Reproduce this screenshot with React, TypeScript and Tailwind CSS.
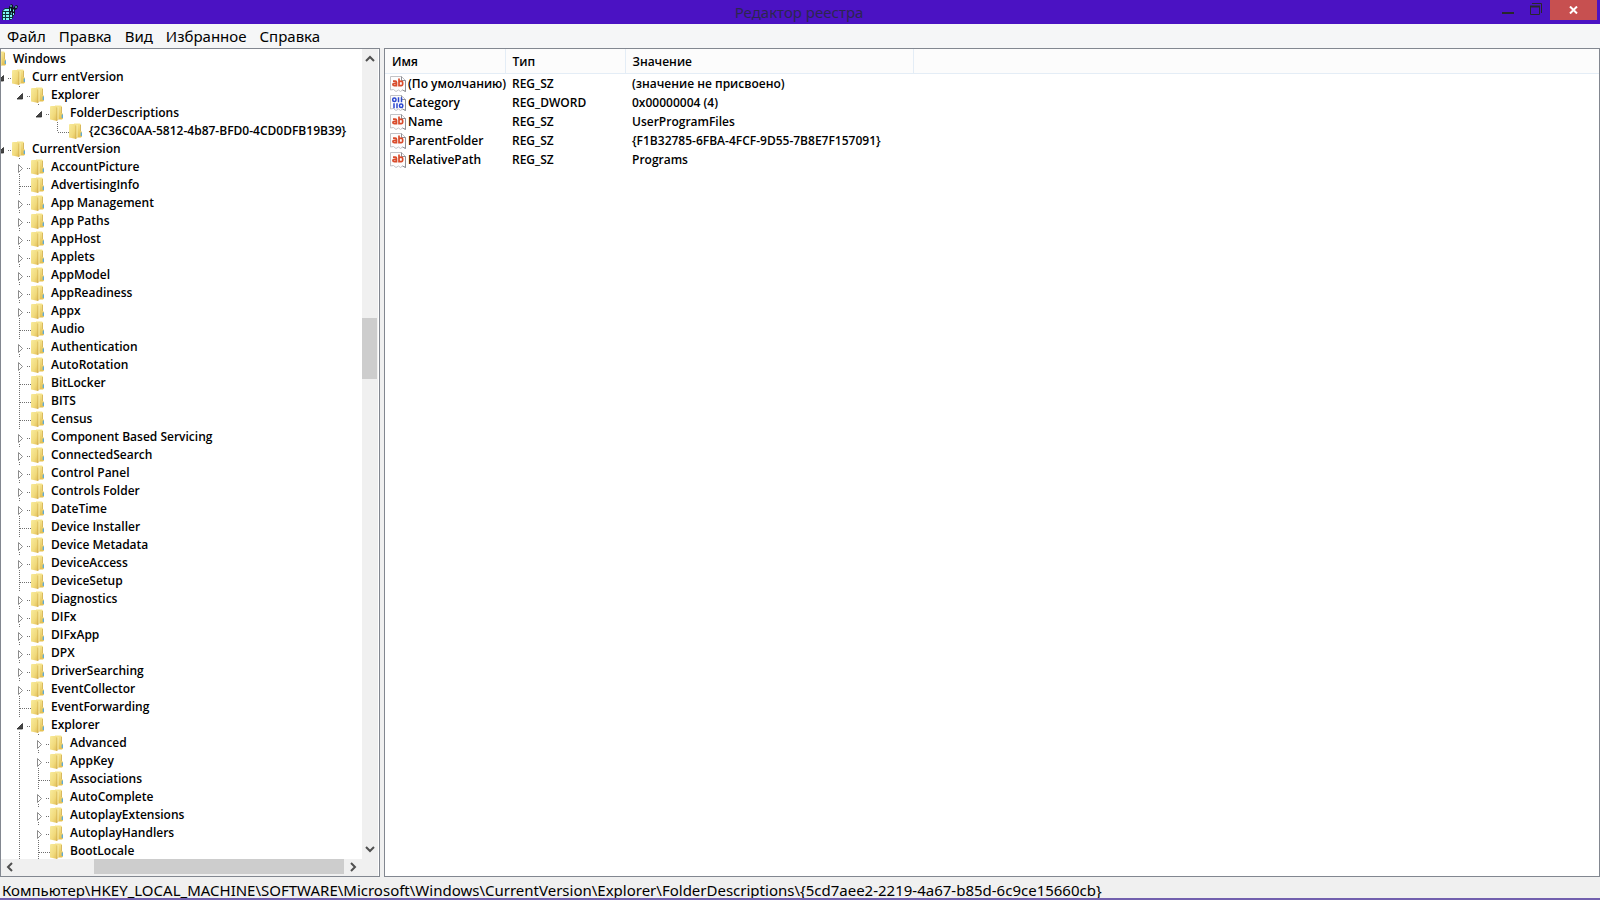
import { useState } from 'react';

interface TreeNode {
  name: string;
  level: number;
  state?: 'open' | 'closed';
  last?: boolean;
  guides?: number[];
}

interface RegistryValue {
  name: string;
  type: string;
  value: string;
}

const menuItems = ['Файл', 'Правка', 'Вид', 'Избранное', 'Справка'];

// Subkeys of CurrentVersion, a leading "-" marks a key without children
const versionKeys = [
  'AccountPicture',
  '-AdvertisingInfo',
  'App Management',
  'App Paths',
  'AppHost',
  'Applets',
  'AppModel',
  'AppReadiness',
  'Appx',
  '-Audio',
  'Authentication',
  'AutoRotation',
  '-BitLocker',
  '-BITS',
  '-Census',
  'Component Based Servicing',
  'ConnectedSearch',
  'Control Panel',
  'Controls Folder',
  'DateTime',
  '-Device Installer',
  'Device Metadata',
  'DeviceAccess',
  '-DeviceSetup',
  'Diagnostics',
  'DIFx',
  'DIFxApp',
  'DPX',
  'DriverSearching',
  'EventCollector',
  '-EventForwarding',
];

const explorerKeys = [
  'Advanced',
  'AppKey',
  '-Associations',
  'AutoComplete',
  'AutoplayExtensions',
  'AutoplayHandlers',
  '-BootLocale',
];

const toNode = (key: string, level: number, guides: number[] = []): TreeNode => ({
  name: key.replace(/^-/, ''),
  level,
  state: key.startsWith('-') ? undefined : 'closed',
  guides,
});

const treeNodes: TreeNode[] = [
  { name: 'Windows', level: 0, state: 'open' },
  { name: 'Curr entVersion', level: 1, state: 'open' },
  { name: 'Explorer', level: 2, state: 'open', last: true },
  { name: 'FolderDescriptions', level: 3, state: 'open', last: true },
  { name: '{2C36C0AA-5812-4b87-BFD0-4CD0DFB19B39}', level: 4, last: true },
  { name: 'CurrentVersion', level: 1, state: 'open' },
  ...versionKeys.map((key) => toNode(key, 2)),
  { name: 'Explorer', level: 2, state: 'open' },
  ...explorerKeys.map((key) => toNode(key, 3, [2])),
];

const values: RegistryValue[] = [
  { name: '(По умолчанию)', type: 'REG_SZ', value: '(значение не присвоено)' },
  { name: 'Category', type: 'REG_DWORD', value: '0x00000004 (4)' },
  { name: 'Name', type: 'REG_SZ', value: 'UserProgramFiles' },
  { name: 'ParentFolder', type: 'REG_SZ', value: '{F1B32785-6FBA-4FCF-9D55-7B8E7F157091}' },
  { name: 'RelativePath', type: 'REG_SZ', value: 'Programs' },
];

function AppIcon() {
  return (
    <svg width="18" height="18" viewBox="0 0 18 18" className="shrink-0" aria-hidden="true">
      <path d="M1 8l3-3 4 0 2 4 3 0-1 6-2 2H1z" fill="#12343c" />
      <path d="M2 8l2-2h4v2zM2 9h2v2H2zM5 9h3v2H5zM2 12h2v2H2zM5 12h3v2H5zM9 12h2v2H9zM2 15h2v2H2zM5 15h3v2H5zM9 15h2v1H9z" fill="#7df6f4" />
      <path d="M8 4l2-3 2 1v3l3-3 2 1-1 3-2 1v4l-2 2-2-3-2-3z" fill="#0c1420" />
      <path d="M9 3l1-1 1 1-1 1zM14 4l1-1 1 1-1 1zM9 6l1-1v3H9zM12 7l1-1v2l-1 1zM10 10l1-1v3zM12 10h1v2h-1z" fill="#74f4f2" />
    </svg>
  );
}

function FolderIcon() {
  return (
    <svg width="13" height="16" viewBox="0 0 13 16" className="shrink-0" aria-hidden="true">
      <defs>
        <linearGradient id="folderFront" x1="0" x2="1" y1="0" y2="1">
          <stop offset="0" stopColor="#f8eb9c" />
          <stop offset=".6" stopColor="#f1da7c" />
          <stop offset="1" stopColor="#dfbb55" />
        </linearGradient>
        <linearGradient id="folderBack" x1="0" x2="0" y1="0" y2="1">
          <stop offset="0" stopColor="#f6e590" />
          <stop offset="1" stopColor="#e3bf50" />
        </linearGradient>
      </defs>
      <path d="M5 .5h6l1 1V8l1 1v4.500l-1 1H5z" fill="url(#folderBack)" />
      <path d="M0 1.500L1 1h4l2 1.500V16l-2-.5-5-1z" fill="url(#folderFront)" />
      <path d="M7 2.500V16" stroke="#cda849" strokeWidth=".8" />
      <path d="M8 2v12" stroke="#faf0b0" strokeWidth="1" />
      <path d="M11.500 2v6" stroke="#d9b95e" strokeWidth="1" />
      <path d="M12.300 9.500v3.500" stroke="#4fa6e6" strokeWidth="1.200" />
    </svg>
  );
}

function ValueIcon({ type }: { type: string }) {
  const binary = type === 'REG_DWORD';
  return (
    <svg width="16" height="16" viewBox="0 0 16 16" className="shrink-0" aria-hidden="true">
      <path d="M.5.5h11l4 4v11l-3-1.500-2 1.500-2-1.500-2.500 1.500-2.500-2-3 .5z" fill="#fdfdfd" stroke="#c2c2c6" />
      <path d="M11.500.5v4h4v11l-3-1.500" fill="none" stroke="#8f8f94" />
      {binary ? (
        <g fill="none" stroke="#2b47cf" strokeWidth="1.500">
          <rect x="2.700" y="3" width="3.300" height="3.500" rx="1.500" />
          <path d="M8.500 2.300v4.900M11.500 2.300v4.900M4 8.300v4.900M7 8.300v4.900" />
          <rect x="9.500" y="9" width="3.300" height="3.500" rx="1.500" />
        </g>
      ) : (
        <g fill="none" stroke="#d94c2c" strokeWidth="1.700">
          <path d="M3 5.200h2.300q1.200 0 1.200 1.200v4M6.500 7.300H4.400q-1.500 0-1.500 1.200t1.500 1.200q1.400 0 2.100-.8" />
          <path d="M9 2.500v7.900M9 6.400q.8-1.200 2-1.200 1.700 0 1.700 2.300T11 9.700Q9.800 9.700 9 8.800" />
        </g>
      )}
    </svg>
  );
}

const dotted = { stroke: '#6f6f6f', strokeWidth: 1, strokeDasharray: '1 1' };

// Connector cell between two levels: dotted lines plus the expander arrow
function Connector({ node }: { node: TreeNode }) {
  if (!node.state) {
    return (
      <svg width="19" height="18" className="shrink-0" aria-hidden="true">
        <line x1="7.5" y1="0" x2="7.5" y2={node.last ? 10 : 18} {...dotted} />
        <line x1="8" y1="10.5" x2="19" y2="10.5" {...dotted} />
      </svg>
    );
  }
  return (
    <svg width="19" height="18" className="shrink-0" aria-hidden="true">
      <line x1="7.5" y1="0" x2="7.5" y2="2" {...dotted} />
      {!node.last && <line x1="7.5" y1="16" x2="7.5" y2="18" {...dotted} />}
      <line x1="15" y1="10.5" x2="19" y2="10.5" {...dotted} />
      {node.state === 'open' ? (
        <path d="M10.500 7.500v5.500H5z" fill="#454545" stroke="#262626" strokeWidth=".8" />
      ) : (
        <path d="M6.500 6.500v8l4-4z" fill="#fff" stroke="#8c8c8c" />
      )}
    </svg>
  );
}

function TreeRow({ node, selected, onSelect }: { node: TreeNode; selected: boolean; onSelect: () => void }) {
  return (
    <li role="treeitem" aria-selected={selected} className="flex h-[18px] items-center">
      {Array.from({ length: node.level }, (_, i) => (
        <svg key={i} width="19" height="18" className="shrink-0" aria-hidden="true">
          {node.guides?.includes(i) && <line x1="7.5" y1="0" x2="7.5" y2="18" {...dotted} />}
        </svg>
      ))}
      <Connector node={node} />
      <FolderIcon />
      <button onClick={onSelect} className="ml-[7px] whitespace-pre text-left leading-[18px]">
        {node.name}
      </button>
    </li>
  );
}

function Chevron({ d }: { d: string }) {
  return (
    <svg width="10" height="10" viewBox="0 0 10 10" aria-hidden="true">
      <path d={d} fill="none" stroke="#505050" strokeWidth="2" />
    </svg>
  );
}

export default function App() {
  const [selected, setSelected] = useState(-1);

  return (
    <div className="flex h-screen flex-col overflow-hidden bg-[#f0f0f0] font-['Noto_Sans','Open_Sans',sans-serif] text-black">
      {/* Title bar */}
      <header className="flex h-6 shrink-0 items-center bg-[#4b12c3]">
        <div className="flex flex-1 items-center pl-px">
          <AppIcon />
        </div>
        <h1 className="text-[15px] leading-6 text-[#2c2650]">Редактор реестра</h1>
        <div className="flex flex-1 items-start justify-end self-stretch pr-[3px]">
          <button aria-label="Свернуть" className="flex h-5 w-7 items-center justify-center">
            <svg width="12" height="20" aria-hidden="true">
              <path d="M0 13h12" stroke="#28282c" strokeWidth="2" />
            </svg>
          </button>
          <button aria-label="Восстановить" className="flex h-5 w-7 items-center justify-center">
            <svg width="12" height="20" aria-hidden="true">
              <path d="M2 3.500h9.500V13" fill="none" stroke="#28282c" />
              <path d="M.5 6v8.500h9V6" fill="none" stroke="#28282c" />
              <path d="M0 6.500h10" stroke="#28282c" strokeWidth="2" />
            </svg>
          </button>
          <button aria-label="Закрыть" className="flex h-5 w-[47px] items-center justify-center bg-[#c75050]">
            <svg width="9" height="8" aria-hidden="true">
              <path d="M1 .5l7 7M8 .5l-7 7" stroke="#fff" strokeWidth="2" />
            </svg>
          </button>
        </div>
      </header>

      {/* Menu */}
      <nav className="flex h-6 shrink-0 items-center gap-[13px] bg-[#f5f6f7] pl-[7px] text-[15px] leading-6">
        {menuItems.map((item) => (
          <button key={item}>{item}</button>
        ))}
      </nav>

      <main className="flex min-h-0 flex-1 gap-1 font-['Open_Sans','Noto_Sans',sans-serif] text-[12px] font-semibold">
        {/* Key tree */}
        <aside className="flex w-[380px] shrink-0 flex-col border border-[#828790] bg-white">
          <div className="flex min-h-0 flex-1">
            <div className="min-w-0 flex-1 overflow-hidden pt-px">
              <ul role="tree" className="-ml-[27px]">
                {treeNodes.map((node, i) => (
                  <TreeRow key={i} node={node} selected={selected === i} onSelect={() => setSelected(i)} />
                ))}
              </ul>
            </div>
            <div className="mr-px flex w-4 flex-col items-center bg-[#f0f0f0]">
              <button aria-label="Вверх" className="flex h-5 items-center">
                <Chevron d="M1 7l4-4 4 4" />
              </button>
              <div className="flex w-full flex-1 flex-col">
                <div className="flex-[249]" />
                <div className="w-[15px] flex-[61] bg-[#cdcdcd]" />
                <div className="flex-[460]" />
              </div>
              <button aria-label="Вниз" className="flex h-5 items-center">
                <Chevron d="M1 3l4 4 4-4" />
              </button>
            </div>
          </div>
          <div className="mr-px flex h-[17px] shrink-0 items-start bg-[#f0f0f0] pr-4">
            <button aria-label="Влево" className="flex h-[15px] w-[18px] items-center justify-center">
              <Chevron d="M7 1L3 5l4 4" />
            </button>
            <div className="flex flex-1">
              <div className="flex-[75]" />
              <div className="h-[15px] flex-[250] bg-[#cdcdcd]" />
            </div>
            <button aria-label="Вправо" className="flex h-[15px] w-[18px] items-center justify-center">
              <Chevron d="M3 1l4 4-4 4" />
            </button>
          </div>
        </aside>

        {/* Value list */}
        <section className="min-w-0 flex-1 border border-[#828790] bg-white">
          <table className="w-full table-fixed border-collapse text-left">
            <colgroup>
              <col className="w-[120px]" />
              <col className="w-[120px]" />
              <col className="w-[288px]" />
              <col />
            </colgroup>
            <thead>
              <tr className="h-[24px] border-b border-[#e4edf6] bg-[#fcfcfc] leading-[22px]">
                <th className="border-r border-[#e4edf6] pt-[2px] pl-[7px] font-semibold">Имя</th>
                <th className="border-r border-[#e4edf6] pt-[2px] pl-[7px] font-semibold">Тип</th>
                <th className="border-r border-[#e4edf6] pt-[2px] pl-[7px] font-semibold">Значение</th>
                <td />
              </tr>
            </thead>
            <tbody>
              {values.map((row) => (
                <tr key={row.name} className="h-[19px] whitespace-nowrap leading-[19px]">
                  <td className="pl-[5px]">
                    <div className="flex items-center gap-[2px]">
                      <ValueIcon type={row.type} />
                      {row.name}
                    </div>
                  </td>
                  <td className="pl-[7px]">{row.type}</td>
                  <td className="pl-[7px]">{row.value}</td>
                  <td />
                </tr>
              ))}
            </tbody>
          </table>
        </section>
      </main>

      <footer className="h-[23px] shrink-0 overflow-hidden whitespace-nowrap border-b-2 border-[#7260ae] bg-[#f0f0f0] pl-[2px] text-[15px] leading-[26px]">
        Компьютер\HKEY_LOCAL_MACHINE\SOFTWARE\Microsoft\Windows\CurrentVersion\Explorer\FolderDescriptions\{'{5cd7aee2-2219-4a67-b85d-6c9ce15660cb}'}
      </footer>
    </div>
  );
}
